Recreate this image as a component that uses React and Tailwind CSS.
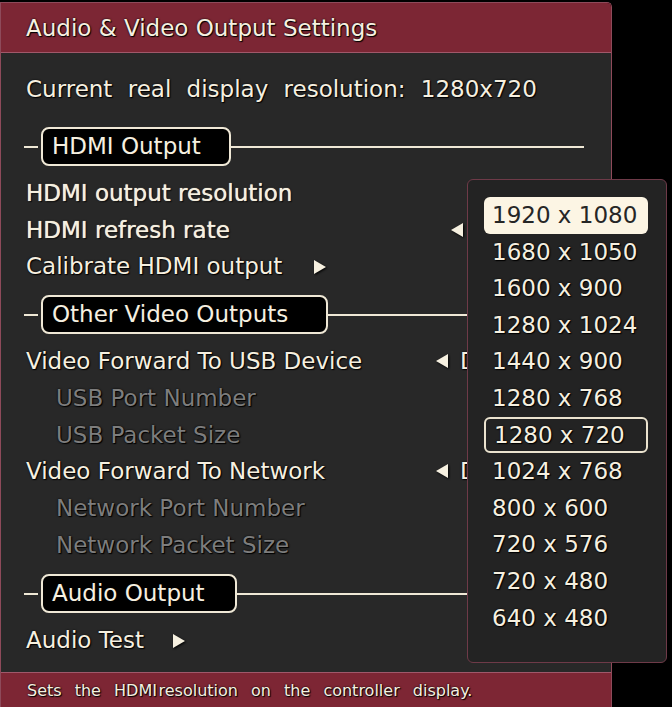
import React from 'react';

const FONT = "font-['DejaVu_Sans',sans-serif]";
const SHADOW = '[text-shadow:0_0_2px_#000,1px_1px_1px_#000]';
const BOLD_SHADOW = '[text-shadow:0_0_1px_#f6f0e0,0_0_2px_#000,1px_1px_1px_#000]';

const resolutions = [
  '1920 x 1080', '1680 x 1050', '1600 x 900', '1280 x 1024',
  '1440 x 900', '1280 x 768', '1280 x 720', '1024 x 768',
  '800 x 600', '720 x 576', '720 x 480', '640 x 480',
];

function Triangle({ left, className }) {
  return (
    <svg width="14" height="16" viewBox="0 0 14 16" className={`shrink-0 drop-shadow-[1px_1px_1px_#000] ${className || ''}`}>
      <polygon points={left ? '13,1 1,8 13,15' : '1,1 13,8 1,15'} fill="#f6f0e0" />
    </svg>
  );
}

function Section({ title, width, mt }) {
  return (
    <div className={`flex items-center w-[583px] h-[39px] ${mt} mb-[9px]`}>
      <div className="ml-[23px] w-[14px] shrink-0 h-[2px] bg-[#efe8d6]" />
      <div
        className={`ml-[3px] h-[39px] ${width} shrink-0 flex items-center pl-[9px] bg-black border-2 border-[#efe8d6] rounded-[8px] text-[#f6f0e0] text-[23px] whitespace-nowrap ${SHADOW}`}
      >
        {title}
      </div>
      <div className="flex-1 h-[2px] bg-[#efe8d6]" />
    </div>
  );
}

function Item({ label, sub, strong, value, valueX = 'w-[434px]', arrow }) {
  return (
    <div className={`flex items-center h-[36.7px] text-[23px] ${strong ? BOLD_SHADOW : SHADOW}`}>
      <div className={`${valueX} shrink-0 flex items-center ${sub ? 'pl-[55px] text-[#7d7d7d]' : 'pl-[25px] text-[#f6f0e0]'}`}>
        <span className="whitespace-nowrap">{label}</span>
        {arrow && <Triangle className="ml-[31px]" />}
      </div>
      {value && (
        <div className="flex items-center gap-[11px] text-[#f6f0e0] whitespace-nowrap overflow-hidden w-[40px]">
          <Triangle left />
          <span>{value}</span>
        </div>
      )}
    </div>
  );
}

export default function App() {
  return (
    <div className={`relative w-[672px] h-[707px] bg-black overflow-hidden ${FONT}`}>
      <div className="mt-[2px] w-[612px] h-[705px] flex flex-col border border-b-0 border-[#8e4a5a] rounded-tr-[5px] overflow-hidden">
        {/* header */}
        <div className={`h-[50px] shrink-0 flex items-center pl-[25px] pt-[1px] bg-[#7c2634] border-b border-[#a0586a] text-[23px] text-[#f6f0e0] ${SHADOW}`}>
          Audio &amp; Video Output Settings
        </div>

        {/* body */}
        <div className="flex-1 bg-[#282828] pt-[17.5px]">
          <div className={`h-[37px] flex items-center pl-[25px] text-[23px] text-[#f6f0e0] [word-spacing:8px] ${SHADOW}`}>
            Current real display resolution: 1280x720
          </div>

          <Section title="HDMI Output" width="w-[190px]" mt="mt-[19.5px]" />
          <Item label="HDMI output resolution" strong />
          <Item label="HDMI refresh rate" strong value="60 Hz" valueX="w-[449px]" />
          <Item label="Calibrate HDMI output" arrow />

          <Section title="Other Video Outputs" width="w-[287px]" mt="mt-[10px]" />
          <Item label="Video Forward To USB Device" value="Disabled" />
          <Item label="USB Port Number" sub />
          <Item label="USB Packet Size" sub />
          <Item label="Video Forward To Network" value="Disabled" />
          <Item label="Network Port Number" sub />
          <Item label="Network Packet Size" sub />

          <Section title="Audio Output" width="w-[196px]" mt="mt-[11px]" />
          <div className={`h-[36.7px] flex items-center pl-[25px] text-[23px] text-[#f6f0e0] ${SHADOW}`}>
            <span>Audio Test</span>
            <Triangle className="ml-[28px]" />
          </div>
        </div>

        {/* footer */}
        <div className={`h-[35px] shrink-0 flex items-center pl-[26px] pt-[2px] bg-[#7d2634] border-t border-[#a0586a] text-[16px] text-[#f6f0e0] [word-spacing:8px] ${SHADOW}`}>
          Sets the HDMI{'\u200A'}resolution on the controller display.
        </div>
      </div>

      {/* resolution dropdown */}
      <div className="absolute left-[467px] top-[179px] w-[200px] h-[484px] bg-[#232323] border-[1.5px] border-[#6e3a48] rounded-[6px] pt-[17px] pl-[16px] pr-[18px]">
        {resolutions.map((r, i) => (
          <div
            key={r}
            className={`h-[36.6px] flex items-center pl-[8px] text-[23px] rounded-[6px] ${
              i === 0
                ? 'bg-[#fcf5e4] text-[#262626]'
                : i === 6
                ? `border-2 border-[#ebe3cf] text-[#f6f0e0] pl-[6px] ${SHADOW}`
                : `text-[#f6f0e0] ${SHADOW}`
            }`}
          >
            {r}
          </div>
        ))}
      </div>
    </div>
  );
}
